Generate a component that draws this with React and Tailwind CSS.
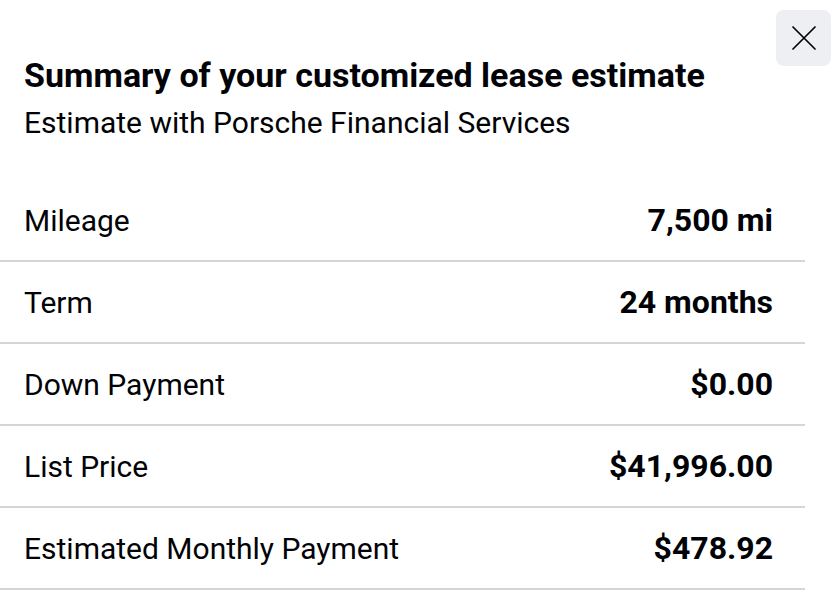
const rows = [
    { label: 'Mileage', value: '7,500 mi' },
    { label: 'Term', value: '24 months' },
    { label: 'Down Payment', value: '$0.00' },
    { label: 'List Price', value: '$41,996.00' },
    { label: 'Estimated Monthly Payment', value: '$478.92' },
];

export default function App() {
    return (
        <div className="relative w-[838px] h-[612px] bg-white text-[#010205] overflow-hidden" style={{ fontFamily: 'Roboto, "Liberation Sans", sans-serif' }}>
            {/* close button */}
            <button className="absolute top-[10px] left-[776px] w-[55px] h-[56px] rounded-lg bg-[#eeeff2] flex items-center justify-center">
                <svg width="24" height="24" viewBox="0 0 24 24" fill="none" stroke="#010205" strokeWidth="1.7" strokeLinecap="round">
                    <path d="M1 1 L23 23 M23 1 L1 23" />
                </svg>
            </button>

            <div className="w-[805px] pt-[55px]">
                <div className="pl-6">
                    <h2 className="text-[34px] leading-[40px] font-bold">Summary of your customized lease estimate</h2>
                    <p className="mt-[10px] text-[30px] leading-[36px]">Estimate with Porsche Financial Services</p>
                </div>

                <div className="mt-[39px]">
                    {rows.map((row) => (
                        <div key={row.label} className="h-[82px] flex items-center justify-between pl-6 pr-8 border-b-2 border-[#d5d5d8]">
                            <span className="text-[30px]">{row.label}</span>
                            <span className="text-[32px] font-bold">{row.value}</span>
                        </div>
                    ))}
                </div>
            </div>
        </div>
    );
}
